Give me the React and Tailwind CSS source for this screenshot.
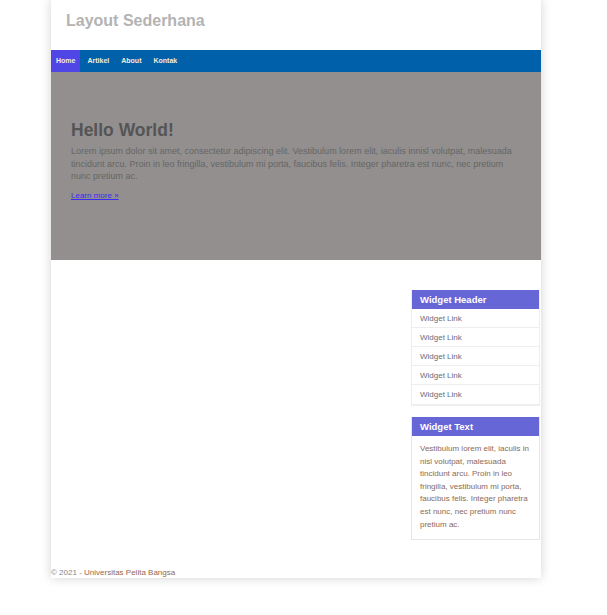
import React from 'react';

const links = ['Widget Link', 'Widget Link', 'Widget Link', 'Widget Link', 'Widget Link'];
const menu = ['Home', 'Artikel', 'About', 'Kontak'];

export default function App() {
  return (
    <div className="min-h-[615px] bg-white font-['Liberation_Sans',Arial,sans-serif]">
      <div className="ml-[51px] w-[490px] bg-white shadow-[0_0_10px_rgba(0,0,0,0.18)]">
        {/* header */}
        <header className="h-[50px] px-[15px] pt-[12px]">
          <h1 className="text-[16px] font-bold leading-[18px] text-[#b3b3b3]">Layout Sederhana</h1>
        </header>

        {/* nav */}
        <nav className="flex h-[22px] bg-[#0060aa]">
          {menu.map((m, i) => (
            <a
              key={m}
              href="#"
              className={`flex items-center px-[5px] pt-[1px] mr-[2px] text-[7px] font-bold text-[#f4ecd8] ${
                i === 0 ? 'bg-[#4f46e5]' : ''
              }`}
            >
              {m}
            </a>
          ))}
        </nav>

        {/* hero */}
        <section className="h-[188px] bg-[#928f8e] px-[20px] pt-[48px]">
          <h2 className="text-[17.5px] font-bold leading-[20px] text-[#555]">Hello World!</h2>
          <p className="mt-[5px] text-[9px] leading-[12.5px] text-[#666]">
            Lorem ipsum dolor sit amet, consectetur adipiscing elit. Vestibulum lorem elit, iaculis innisl volutpat, malesuada tincidunt arcu. Proin in leo fringilla, vestibulum mi porta, faucibus felis. Integer pharetra est nunc, nec pretium nunc pretium ac.
          </p>
          <a href="#" className="mt-[7px] block text-[8px] leading-[12.5px] text-[#3a2cf0] underline">
            Learn more &raquo;
          </a>
        </section>

        {/* content */}
        <div className="flex justify-end pt-[30px] pb-[28px] pr-[1px]">
          <aside className="w-[129px]">
            <div className="border border-[#eee] border-b-2 border-t-0">
              <div className="h-[19px] bg-[#6666d6] px-[8px] text-[9.5px] font-bold leading-[19px] text-white">
                Widget Header
              </div>
              {links.map((l, i) => (
                <a
                  key={i}
                  href="#"
                  className={`block h-[19px] px-[8px] text-[8px] leading-[19px] text-[#6b6b78] ${
                    i < links.length - 1 ? 'border-b border-[#eee]' : ''
                  }`}
                >
                  {l}
                </a>
              ))}
            </div>

            <div className="mt-[11px] border border-t-0 border-[#e6e6e6]">
              <div className="h-[19px] bg-[#6666d6] px-[8px] text-[9.5px] font-bold leading-[19px] text-white">
                Widget Text
              </div>
              <p className="px-[8px] pt-[7px] pb-[8px] text-[8px] leading-[12.6px] text-[#8a6a58]">
                Vestibulum lorem elit, iaculis in nisl volutpat, malesuada tincidunt arcu. Proin in leo fringilla, vestibulum mi porta, faucibus felis. Integer pharetra est nunc, nec pretium nunc pretium ac.
              </p>
            </div>
          </aside>
        </div>

        {/* footer */}
        <footer className="text-[8px] leading-[10px] text-[#888]">
          &copy; 2021 - <span className="text-[#96684c]">Universitas Pelita Bangsa</span>
        </footer>
      </div>
    </div>
  );
}
